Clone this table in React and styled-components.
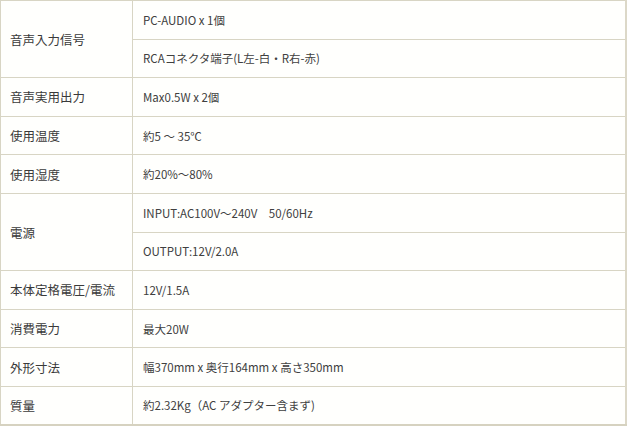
import React from 'react';
import styled, { createGlobalStyle } from 'styled-components';

const Global = createGlobalStyle`
  html, body {
    margin: 0;
    padding: 0;
    background: #ffffff;
  }
  body {
    font-family: "Noto Sans CJK JP", "Liberation Sans", sans-serif;
    color: #3c3c3c;
  }
`;

const Tabela = styled.table`
  width: 627px;
  border-collapse: collapse;
  background: #fffffd;
  border-right: 2px solid #dcd8c8;
  border-bottom: 2px solid #d6d2c0;
`;

const Linha = styled.tr`
  height: 38.6px;
`;

const Rotulo = styled.th`
  width: 122px;
  padding: 0 0 0 9px;
  text-align: left;
  font-weight: normal;
  font-size: 12.5px;
  color: #3a3a3a;
  border: 1px solid #d8d5c4;
  white-space: nowrap;
`;

const Valor = styled.td`
  padding: 0 0 0 10px;
  font-size: 11.5px;
  color: #404040;
  border: 1px solid #d8d5c4;
  white-space: nowrap;
`;

const especificacoes = [
  { rotulo: '音声入力信号', valores: ['PC-AUDIO x 1個', 'RCAコネクタ端子(L左-白・R右-赤)'] },
  { rotulo: '音声実用出力', valores: ['Max0.5W x 2個'] },
  { rotulo: '使用温度', valores: ['約5 ～ 35℃'] },
  { rotulo: '使用湿度', valores: ['約20%～80%'] },
  { rotulo: '電源', valores: ['INPUT:AC100V～240V　50/60Hz', 'OUTPUT:12V/2.0A'] },
  { rotulo: '本体定格電圧/電流', valores: ['12V/1.5A'] },
  { rotulo: '消費電力', valores: ['最大20W'] },
  { rotulo: '外形寸法', valores: ['幅370mm x 奥行164mm x 高さ350mm'] },
  { rotulo: '質量', valores: ['約2.32Kg（AC アダプター含まず)'] },
];

const App = () => (
  <>
    <Global />
    <Tabela>
      <tbody>
        {especificacoes.map(item =>
          item.valores.map((valor, i) => (
            <Linha key={item.rotulo + i}>
              {i === 0 && (
                <Rotulo rowSpan={item.valores.length}>{item.rotulo}</Rotulo>
              )}
              <Valor>{valor}</Valor>
            </Linha>
          ))
        )}
      </tbody>
    </Tabela>
  </>
);

export default App;
